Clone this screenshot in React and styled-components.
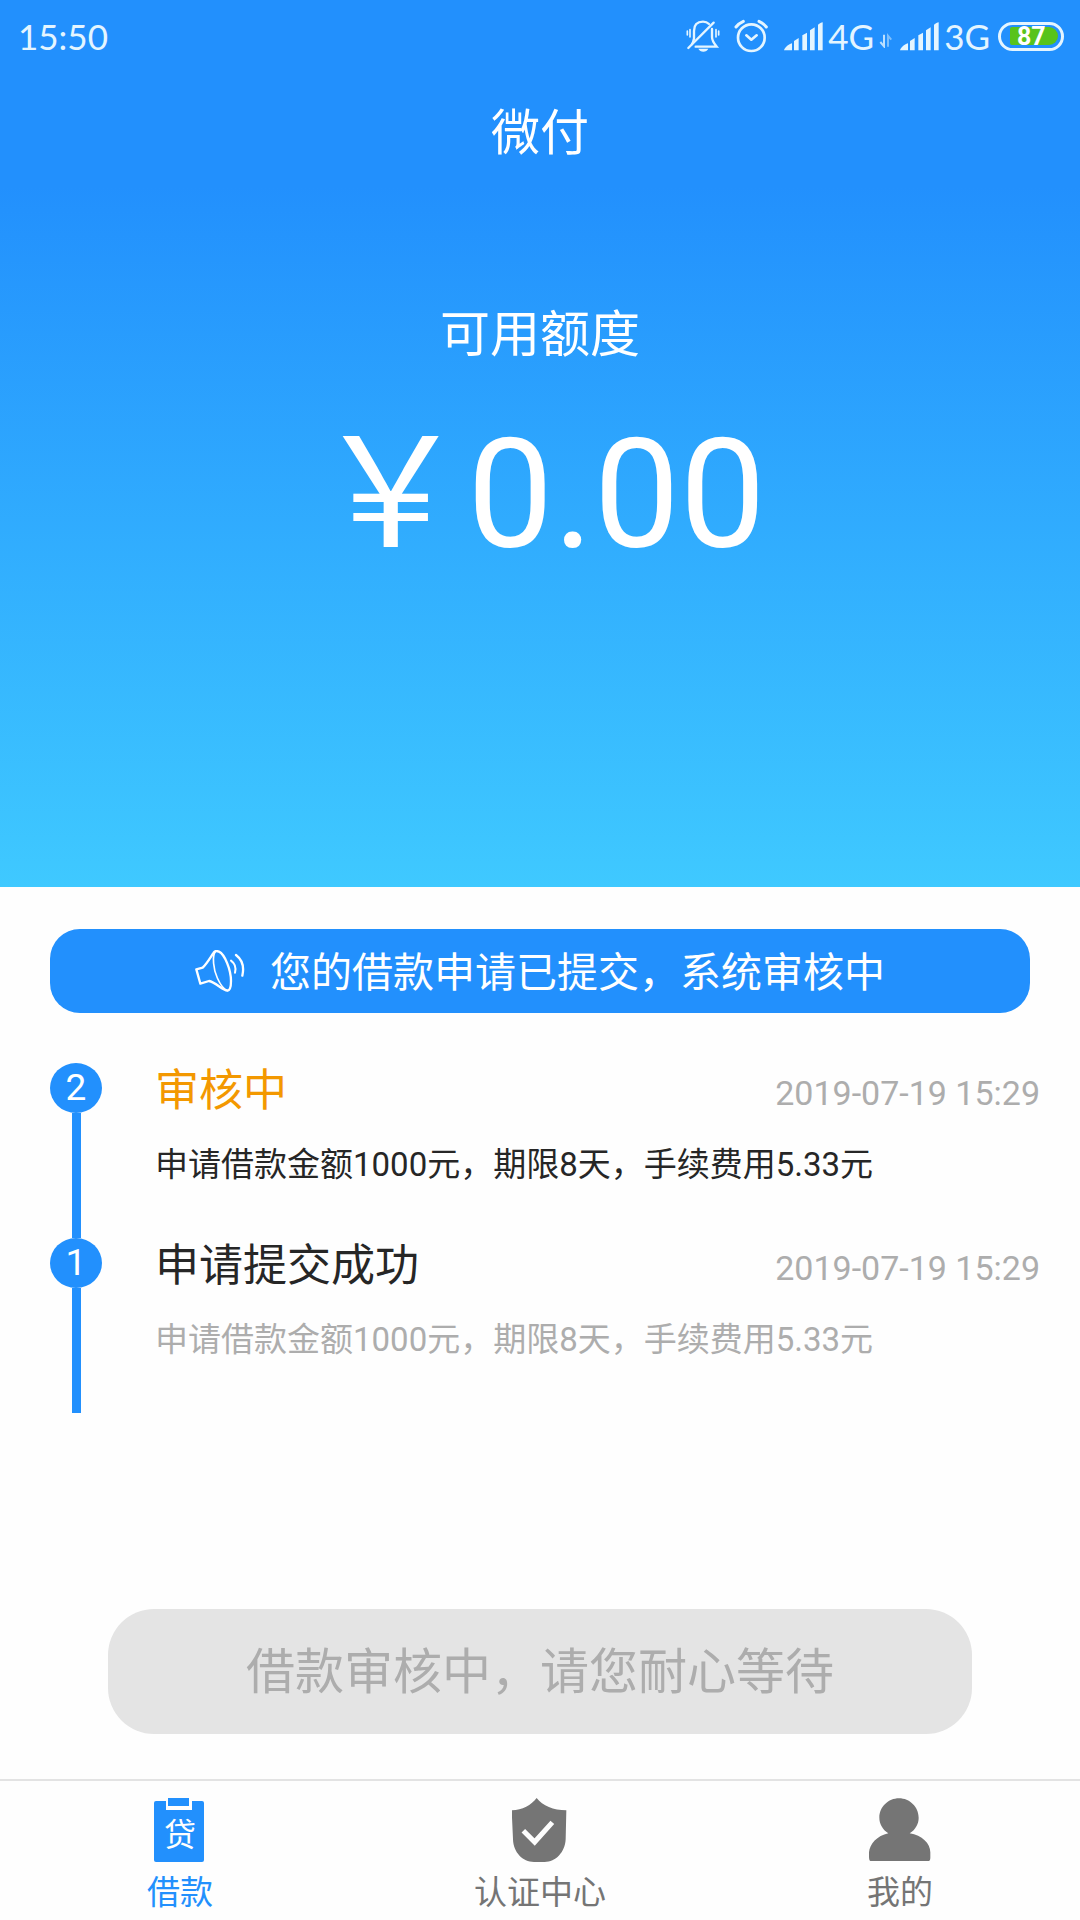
import { useState } from "react";
import styled, { createGlobalStyle } from "styled-components";

const GlobalStyle = createGlobalStyle`
  * {
    box-sizing: border-box;
  }

  body {
    margin: 0;
    background: #fefefe;
    color: #262626;
    font-family: Roboto, "Noto Sans CJK SC", sans-serif;
  }
`

const Page = styled.div`
  min-height: 100vh;
  display: flex;
  flex-direction: column;
`

const Hero = styled.header`
  color: white;
  text-align: center;
  padding-bottom: 302px;
  background: linear-gradient(#2290fd 0%, #2290fd 21%, #3fc9ff 100%);
`

const StatusBar = styled.div`
  display: flex;
  align-items: center;
  justify-content: space-between;
  height: 74px;
  padding: 0 16px 2px 18px;
  color: #e4f5ff;
  font-family: Lato, sans-serif;
  font-size: 35px;
  line-height: 40px;
`

const StatusIcons = styled.div`
  display: flex;
  align-items: center;
  gap: 8px;

  svg {
    display: block;
  }
`

const Alerts = styled.div`
  display: flex;
  align-items: center;
  gap: 14px;
  margin-right: 8px;
`

const Network = styled.div`
  display: flex;
  align-items: center;
  gap: 5px;
`

const Battery = styled.div`
  display: flex;
  align-items: center;
  width: 66px;
  height: 29px;
  padding-left: 9px;
  border: 3px solid #e4f5ff;
  border-radius: 15px;
`

const BatteryLevel = styled.div`
  width: 48px;
  height: 18px;
  padding-left: 7px;
  border-radius: 2px 9px 9px 2px;
  background: #58c31b;
  color: white;
  font-family: Roboto, sans-serif;
  font-size: 25px;
  font-weight: 700;
  line-height: 20px;
  text-align: left;
`

const Title = styled.h1`
  margin: 0;
  font-size: 49px;
  font-weight: 400;
  line-height: 120px;
`

const LimitLabel = styled.div`
  padding-top: 111px;
  font-size: 50px;
  line-height: 60px;
`

const LimitAmount = styled.div`
  margin-top: 40px;
  font-size: 153px;
  line-height: 180px;
`

const Main = styled.main`
  flex: 1;
  display: flex;
  flex-direction: column;
  padding: 42px 0 45px;
`

const Notice = styled.div`
  display: flex;
  align-items: center;
  justify-content: center;
  gap: 25px;
  min-height: 84px;
  margin: 0 50px;
  border-radius: 30px;
  background: #2290fd;
  color: white;
  font-size: 41px;
  line-height: 50px;
`

const NoticeText = styled.span`
  padding-top: 4px;
`

const Timeline = styled.ol`
  list-style: none;
  margin: 50px 40px 50px 50px;
  padding: 0;
`

const Step = styled.li`
  display: flex;
  gap: 53px;
  min-height: 175px;
`

const Rail = styled.div`
  display: flex;
  flex-direction: column;
  align-items: center;

  &::after {
    content: "";
    flex: 1;
    width: 9px;
    background: #2290fd;
  }
`

const StepNumber = styled.div`
  width: 52px;
  height: 50px;
  border-radius: 50%;
  background: #2290fd;
  color: white;
  font-size: 37px;
  line-height: 50px;
  text-align: center;
`

const StepBody = styled.div`
  flex: 1;
`

const StepHead = styled.div`
  display: flex;
  align-items: flex-start;
  justify-content: space-between;
`

const StepTitle = styled.h2`
  margin: 0;
  font-size: 44px;
  font-weight: 400;
  line-height: 56px;
  color: ${({ $active }) => ($active ? "#f39800" : "#262626")};
`

const StepTime = styled.time`
  color: #adadad;
  font-size: 34px;
  line-height: 60px;
`

const StepText = styled.p`
  margin: 17px 0 0;
  font-size: 33px;
  line-height: 50px;
  color: ${({ $active }) => ($active ? "#262626" : "#adadad")};
`

const WaitButton = styled.button`
  width: 80%;
  min-height: 125px;
  margin: auto auto 0;
  padding: 2px 0 0;
  border: 0;
  border-radius: 46px;
  background: #e4e4e4;
  color: #adadad;
  font-family: inherit;
  font-size: 49px;
  line-height: 60px;
`

const TabBar = styled.nav`
  display: grid;
  grid-template-columns: repeat(3, 1fr);
  border-top: 2px solid #e3e3e3;
`

const Tab = styled.a`
  display: flex;
  flex-direction: column;
  align-items: center;
  padding: 17px 0 2px;
  color: ${({ $active }) => ($active ? "#2290fd" : "#757575")};
  font-size: 33px;
  line-height: 50px;
  text-decoration: none;

  svg {
    display: block;
    margin-bottom: 6px;
  }
`

const MuteIcon = () => (
  <svg width="34" height="34" viewBox="56 58 102 102" fill="none" stroke="currentColor" strokeWidth="7" strokeLinecap="round">
    <path d="M80 118V94C80 74 92 66 107 66C115 66 121 69 125 73" />
    <path d="M134 88V112C134 124 139 130 148 141H85" />
    <path d="M79 120C78 126 76 130 74 133" />
    <path d="M139 69L63 145" />
    <path d="M60 94V106M68 90V112M146 90V112M154 94V106" strokeWidth="5" />
    <path d="M93 147H123C120 153 115 156 108 156C101 156 96 153 93 147Z" fill="currentColor" stroke="none" />
  </svg>
)

const AlarmIcon = () => (
  <svg width="34" height="34" viewBox="199 59 102 102" fill="none" stroke="currentColor" strokeWidth="8" strokeLinecap="round" strokeLinejoin="round">
    <circle cx="251" cy="115" r="40" />
    <path d="M236 108L251 121L267 108" />
    <path d="M205 83C211 75 218 70 227 66M274 66C283 70 290 75 296 83" strokeWidth="9" />
  </svg>
)

const SignalIcon = () => (
  <svg width="39" height="29" viewBox="343 62 117 87" fill="currentColor">
    <path d="M343 147C345 139 355 130 367 126V147Z" />
    <path d="M373 119L387 110V147H373Z" />
    <path d="M398 102L412 94V147H398Z" />
    <path d="M421 87L435 78V147H421Z" />
    <path d="M445 70C450 66 455 63 459 63V147H445Z" />
  </svg>
)

const DataIcon = () => (
  <svg width="13" height="24" viewBox="625 76 39 72" fill="none" stroke="currentColor" strokeWidth="6" opacity="0.8">
    <path d="M640 108V143L629 130" />
    <path d="M652 144V111L662 123" opacity="0.6" />
  </svg>
)

const HornIcon = () => (
  <svg width="50" height="42" viewBox="495 119 150 126" fill="none" stroke="currentColor" strokeWidth="7" strokeLinecap="round" strokeLinejoin="round">
    <path d="M499 177L518 172C532 158 543 138 551 127C554 122 560 121 567 124C584 132 603 178 603 212C603 229 600 241 592 241C577 240 557 216 537 212L511 220L499 177Z" />
    <path d="M556 124C546 136 550 178 562 203C571 223 582 238 593 241" strokeWidth="5" />
    <path d="M603 151C614 159 619 172 615 187" strokeWidth="6" />
    <path d="M618 134C635 147 643 170 637 196" />
  </svg>
)

const LoanIcon = () => (
  <svg width="52" height="64" viewBox="0 0 52 64">
    <path d="M2 3H48Q50 3 50 5V62Q50 64 48 64H2Q0 64 0 62V5Q0 3 2 3Z" fill="currentColor" />
    <path d="M12 0H38V12H12Z" fill="#fefefe" />
    <path d="M14 0H35V8H14Z" fill="currentColor" />
    <text x="26" y="48" fill="#fefefe" fontSize="32" textAnchor="middle">贷</text>
  </svg>
)

const ShieldIcon = () => (
  <svg width="56" height="64" viewBox="184 83 168 192">
    <path d="M258 83C276 106 308 120 347 120L345 207C343 246 315 275 282 275H250C216 275 188 246 187 207L183 120C214 120 242 104 258 83Z" fill="currentColor" />
    <path d="M218 181L252 215L305 156" fill="none" stroke="#fefefe" strokeWidth="15" />
  </svg>
)

const UserIcon = () => (
  <svg width="62" height="64" viewBox="86 83 186 192" fill="currentColor">
    <path d="M176 84C208 84 235 110 235 142C235 160 226 177 208 189C245 194 270 220 270 246V262C270 268 268 272 265 272H90C87 272 86 266 86 258V246C88 222 110 196 144 189C126 177 117 160 117 142C117 110 144 84 176 84Z" />
  </svg>
)

const steps = [
  { no: 2, title: "审核中", time: "2019-07-19 15:29", text: "申请借款金额1000元，期限8天，手续费用5.33元" },
  { no: 1, title: "申请提交成功", time: "2019-07-19 15:29", text: "申请借款金额1000元，期限8天，手续费用5.33元" },
]

const tabs = [
  { id: "loan", name: "借款", Icon: LoanIcon },
  { id: "verify", name: "认证中心", Icon: ShieldIcon },
  { id: "mine", name: "我的", Icon: UserIcon },
]

export default () => {
  const [tab, setTab] = useState("loan")

  return (
    <Page>
      <GlobalStyle />
      <Hero>
        <StatusBar>
          <span>15:50</span>
          <StatusIcons>
            <Alerts>
              <MuteIcon />
              <AlarmIcon />
            </Alerts>
            <Network>
              <SignalIcon />
              <span>4G</span>
              <DataIcon />
            </Network>
            <Network>
              <SignalIcon />
              <span>3G</span>
            </Network>
            <Battery>
              <BatteryLevel>87</BatteryLevel>
            </Battery>
          </StatusIcons>
        </StatusBar>
        <Title>微付</Title>
        <LimitLabel>可用额度</LimitLabel>
        <LimitAmount>￥0.00</LimitAmount>
      </Hero>

      <Main>
        <Notice>
          <HornIcon />
          <NoticeText>您的借款申请已提交，系统审核中</NoticeText>
        </Notice>
        <Timeline>
          {steps.map((step, i) => (
            <Step key={step.no}>
              <Rail>
                <StepNumber>{step.no}</StepNumber>
              </Rail>
              <StepBody>
                <StepHead>
                  <StepTitle $active={i === 0}>{step.title}</StepTitle>
                  <StepTime>{step.time}</StepTime>
                </StepHead>
                <StepText $active={i === 0}>{step.text}</StepText>
              </StepBody>
            </Step>
          ))}
        </Timeline>
        <WaitButton disabled>借款审核中，请您耐心等待</WaitButton>
      </Main>

      <TabBar>
        {tabs.map(({ id, name, Icon }) => (
          <Tab key={id} href={`#${id}`} $active={tab === id} onClick={() => setTab(id)}>
            <Icon />
            {name}
          </Tab>
        ))}
      </TabBar>
    </Page>
  )
}
